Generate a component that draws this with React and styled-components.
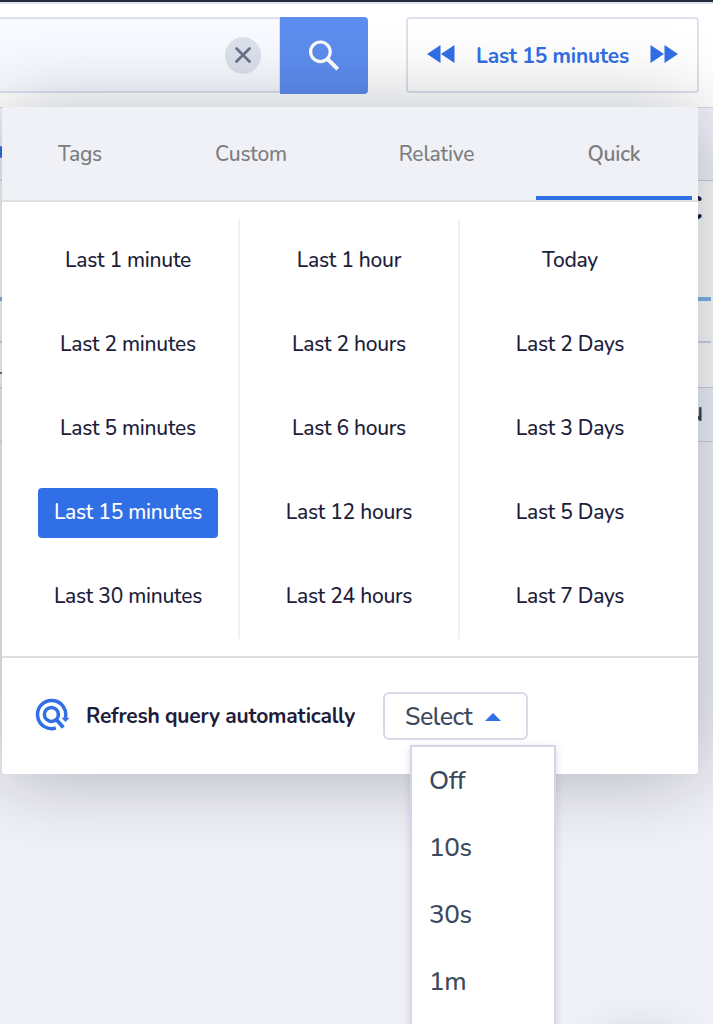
import React from 'react';
import styled, { createGlobalStyle, css } from 'styled-components';

const BLUE = '#316fe6';

const GlobalStyle = createGlobalStyle`
  *, *::before, *::after { box-sizing: border-box; }
  body {
    margin: 0;
    font-family: Nunito, Lato, "Open Sans", sans-serif;
    color: #201d3b;
    overflow: hidden;
  }
  button { font: inherit; color: inherit; margin: 0; padding: 0; border: 0; background: none; }
`;

const Page = styled.div`
  position: relative;
  display: flex;
  flex-direction: column;
  width: 713px;
  height: 1024px;
  overflow: hidden;
  background: #f0f1f6;
`;

const Header = styled.header`
  display: flex;
  align-items: flex-start;
  flex: none;
  height: 104px;
  padding: 13px 14px 0 0;
  background: #fff;
  border-bottom: 1px solid #d5d9e6;
`;

const TopRule = styled.div`
  height: 4px;
  flex: none;
  background: #dfe3ed;
  border-top: 2px solid #242a40;
`;

const SearchField = styled.div`
  display: flex;
  align-items: center;
  justify-content: flex-end;
  width: 280px;
  height: 76px;
  padding-right: 18px;
  background: #f8faff;
  border: solid #dce1ec;
  border-width: 2px 1px 2px 0;
`;

const ClearButton = styled.button`
  display: flex;
  align-items: center;
  justify-content: center;
  width: 36px;
  height: 37px;
  border-radius: 50%;
  background: #dce1eb;
`;

const SearchButton = styled.button`
  display: flex;
  align-items: center;
  justify-content: center;
  width: 88px;
  height: 77px;
  border-radius: 0 4px 4px 0;
  background: #5d8dee;
`;

const RangeBox = styled.div`
  display: flex;
  align-items: center;
  justify-content: space-between;
  width: 293px;
  height: 76px;
  margin-left: auto;
  padding: 0 19px;
  border: 2px solid #dce1ec;
  border-radius: 4px;
  color: ${BLUE};

  svg { margin-bottom: 2px; }
`;

const RangeLabel = styled.span`
  padding-top: 2px;
  font-size: 21px;
  font-weight: 700;
  letter-spacing: -0.2px;
`;

const Strip = styled.div`
  display: flex;
  align-items: center;
  justify-content: space-between;
  flex: none;
  height: ${(p) => p.$height}px;
  border-bottom: 1px solid #c9cede;
  background: ${(p) => p.$fill};
`;

const LinkDot = styled.i`
  width: 3px;
  height: 12px;
  margin-top: 16px;
  border-radius: 0 3px 3px 0;
  background: ${BLUE};
`;

const Chart = styled.div`
  display: flex;
  flex-direction: column;
  flex: none;
  height: 207px;
  background: #fafafa;
  border-bottom: 1px solid #c9cede;
`;

const ChartTitle = styled.div`
  height: 116px;
  padding: 3px 10px 0 0;
  text-align: right;
  font-size: 36px;
  font-weight: 700;
`;

const Series = styled.div`
  height: 4px;
  width: 711px;
  background: #7fb2ea;
`;

const Axis = styled.div`
  height: 2px;
  width: 711px;
  margin-top: 40px;
  background: #cbd2e4;
`;

const Tick = styled.div`
  width: 3px;
  height: 2px;
  margin-top: 29px;
  background: #77777c;
`;

const ColumnName = styled.span`
  margin: -1px 10px 0 auto;
  font-size: 20px;
  font-weight: 700;
  color: #36425a;
`;

const Fab = styled.div`
  position: absolute;
  left: 597px;
  top: 1038px;
  width: 88px;
  height: 88px;
  border-radius: 50%;
  box-shadow: 0 0 56px rgba(0, 0, 0, 0.2);
`;

const Popover = styled.section`
  position: absolute;
  left: 2px;
  top: 107px;
  width: 696px;
  height: 667px;
  display: flex;
  flex-direction: column;
  border-radius: 3px;
  background: #fff;
  box-shadow: 0 2px 80px rgba(5, 12, 28, 0.28);
`;

const Tabs = styled.nav`
  display: flex;
  justify-content: space-between;
  height: 95px;
  padding-right: 6px;
  background: #f0f1f6;
  border-bottom: 2px solid #dfe0e2;
  border-radius: 3px 3px 0 0;
`;

const Tab = styled.button`
  width: ${(p) => p.$width}px;
  margin-left: ${(p) => p.$gap || 0}px;
  padding-top: 5px;
  font-size: 21px;
  font-weight: ${(p) => (p.$active ? 600 : 500)};
  letter-spacing: -0.2px;
  color: #7c7d80;
  border-bottom: 4px solid ${(p) => (p.$active ? BLUE : 'transparent')};
`;

const Presets = styled.div`
  display: grid;
  grid-template-columns: 222px 220px 220px;
  height: 454px;
  padding: 17px 16px 0;
`;

const PresetColumn = styled.div`
  display: grid;
  grid-template-rows: repeat(5, 84px);
  place-items: center;
  height: 420px;
  border-right: 2px solid #f0f1f7;
  &:last-child { border-right: 0; }
`;

const Preset = styled.button`
  height: 50px;
  padding: 0 16px 2px;
  border-radius: 4px;
  font-size: 21px;
  font-weight: 500;
  letter-spacing: -0.26px;
  white-space: nowrap;
  ${(p) => p.$active && css`
    background: ${BLUE};
    color: #fff;
  `}
`;

const Footer = styled.footer`
  display: flex;
  align-items: center;
  height: 118px;
  padding-left: 33px;
  border-top: 2px solid #dfdfe1;

  > svg { margin-bottom: 4px; }
`;

const RefreshLabel = styled.span`
  width: 270px;
  margin-left: 16px;
  font-size: 21px;
  font-weight: 700;
  letter-spacing: -0.23px;
  white-space: nowrap;
`;

const SelectWrap = styled.div`
  position: relative;
  margin-left: 27px;
`;

const SelectButton = styled.button`
  display: flex;
  align-items: center;
  gap: 13px;
  width: 145px;
  height: 48px;
  padding: 1px 0 0 20px;
  border: 2px solid #d9d9e8;
  border-radius: 6px;
  font-size: 25px;
  font-weight: 500;
  letter-spacing: -0.5px;
  color: #3c4a60;
`;

const Menu = styled.ul`
  position: absolute;
  left: 27px;
  top: 53px;
  width: 146px;
  height: 340px;
  margin: 0;
  padding: 2px 0 0 17px;
  list-style: none;
  background: #fff;
  border: 2px solid #d5d5e5;
  box-shadow: 0 2px 8px rgba(40, 40, 90, 0.16);
`;

const Option = styled.li`
  height: 67px;
  line-height: 63px;
  font-size: 26px;
  font-weight: 500;
  letter-spacing: -0.3px;
  color: #3c4a60;
`;

const CloseIcon = () => (
  <svg width="18" height="18" viewBox="0 0 18 18" fill="none" stroke="#697389" strokeWidth="2.8" strokeLinecap="round">
    <path d="M2.5 2.5l13 13M15.5 2.5l-13 13" />
  </svg>
);

const SearchIcon = () => (
  <svg width="32" height="32" viewBox="0 0 32 32" fill="none" stroke="#fff">
    <circle cx="12.4" cy="11.8" r="9.8" strokeWidth="3.2" />
    <path d="M20 19.5l9.7 9.7" strokeWidth="4" />
  </svg>
);

const SkipIcon = ({ forward }) => (
  <svg width="28" height="18" viewBox="0 0 28 18" fill={BLUE}>
    <path d={forward ? 'M0.5 0v18L14 9zM14.5 0v18L28 9z' : 'M13.5 0v18L0 9zM27.5 0v18L14 9z'} />
  </svg>
);

const RefreshIcon = () => (
  <svg width="35" height="33" viewBox="0 0 35 33" fill="none" stroke={BLUE} strokeWidth="3.5">
    <path d="M20.8 30A14.1 14.1 0 1 1 30.3 20" />
    <circle cx="16.4" cy="16.4" r="7" />
    <path d="M21.2 21.4l7.2 8" strokeWidth="3.8" />
    <path d="M26.5 19.8h8l-4 4.2z" fill={BLUE} stroke="none" />
  </svg>
);

const CaretUp = () => (
  <svg width="16" height="8" viewBox="0 0 16 8" fill={BLUE}>
    <path d="M0 8L8 0l8 8z" />
  </svg>
);

const TABS = [
  { name: 'Tags', width: 156 },
  { name: 'Custom', width: 186 },
  { name: 'Relative', width: 185 },
  { name: 'Quick', width: 156, gap: 7 },
];

const PRESETS = [
  ['Last 1 minute', 'Last 2 minutes', 'Last 5 minutes', 'Last 15 minutes', 'Last 30 minutes'],
  ['Last 1 hour', 'Last 2 hours', 'Last 6 hours', 'Last 12 hours', 'Last 24 hours'],
  ['Today', 'Last 2 Days', 'Last 3 Days', 'Last 5 Days', 'Last 7 Days'],
];

export default function App() {
  return (
    <Page>
      <GlobalStyle />
      <TopRule />
      <Header>
        <SearchField>
          <ClearButton aria-label="Clear"><CloseIcon /></ClearButton>
        </SearchField>
        <SearchButton aria-label="Search"><SearchIcon /></SearchButton>
        <RangeBox>
          <SkipIcon />
          <RangeLabel>Last 15 minutes</RangeLabel>
          <SkipIcon forward />
        </RangeBox>
      </Header>
      <Strip $height={73} $fill="#f0f1f9"><LinkDot /></Strip>
      <Chart>
        <ChartTitle>C</ChartTitle>
        <Series />
        <Axis />
        <Tick />
      </Chart>
      <Strip $height={54} $fill="#edf0f8"><ColumnName>N</ColumnName></Strip>
      <Fab />
      <Popover>
        <Tabs>
          {TABS.map((t) => (
            <Tab key={t.name} $width={t.width} $gap={t.gap} $active={t.name === 'Quick'}>
              {t.name}
            </Tab>
          ))}
        </Tabs>
        <Presets>
          {PRESETS.map((column, i) => (
            <PresetColumn key={i}>
              {column.map((label) => (
                <Preset key={label} $active={label === 'Last 15 minutes'}>{label}</Preset>
              ))}
            </PresetColumn>
          ))}
        </Presets>
        <Footer>
          <RefreshIcon />
          <RefreshLabel>Refresh query automatically</RefreshLabel>
          <SelectWrap>
            <SelectButton>Select<CaretUp /></SelectButton>
            <Menu>
              {['Off', '10s', '30s', '1m'].map((o) => <Option key={o}>{o}</Option>)}
            </Menu>
          </SelectWrap>
        </Footer>
      </Popover>
    </Page>
  );
}
